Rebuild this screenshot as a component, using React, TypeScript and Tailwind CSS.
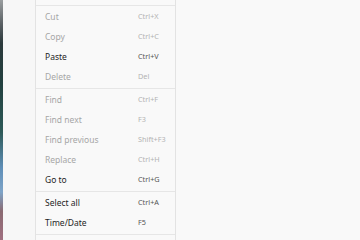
type Item = { label: string; keys: string; disabled?: boolean };

const SECTIONS: Item[][] = [
  [
    { label: 'Cut', keys: 'Ctrl+X', disabled: true },
    { label: 'Copy', keys: 'Ctrl+C', disabled: true },
    { label: 'Paste', keys: 'Ctrl+V' },
    { label: 'Delete', keys: 'Del', disabled: true },
  ],
  [
    { label: 'Find', keys: 'Ctrl+F', disabled: true },
    { label: 'Find next', keys: 'F3', disabled: true },
    { label: 'Find previous', keys: 'Shift+F3', disabled: true },
    { label: 'Replace', keys: 'Ctrl+H', disabled: true },
    { label: 'Go to', keys: 'Ctrl+G' },
  ],
  [
    { label: 'Select all', keys: 'Ctrl+A' },
    { label: 'Time/Date', keys: 'F5' },
  ],
];

function MenuRow({ item }: { item: Item }) {
  return (
    <div className="flex items-center h-[20px] pl-[9px] pr-[8px]">
      <span
        className={`flex-1 text-[8.5px] leading-none ${item.disabled ? 'text-[#a6a6a6]' : 'text-[#1e1e1e]'}`}
      >
        {item.label}
      </span>
      <span
        className={`w-[29px] text-[7.3px] leading-none ${item.disabled ? 'text-[#b3b3b3]' : 'text-[#555555]'}`}
      >
        {item.keys}
      </span>
    </div>
  );
}

export default function App() {
  return (
    <div
      className="flex w-[360px] h-[240px] overflow-hidden bg-[#f9f9f9]"
      style={{ fontFamily: '"Noto Sans", "Open Sans", sans-serif' }}
    >
      {/* wallpaper peeking at the left edge */}
      <div className="w-[3px] shrink-0 bg-[linear-gradient(to_bottom,#9a9ea0_0%,#5a6064_10%,#2c3a3c_18%,#22403f_35%,#2e5a58_55%,#5f8fb8_70%,#7ea4c8_80%,#8a6a72_88%,#a07080_100%)]" />
      <div className="w-[32px] shrink-0 bg-[#f7f7f7]" />

      {/* edit menu */}
      <div className="w-[141px] shrink-0 flex flex-col bg-[#f9f9f9] border-x border-[#e3e3e3]">
        <div className="h-[5px]" />
        {SECTIONS.map((section, i) => (
          <div key={i} className="border-t border-[#e6e6e6] py-px">
            {section.map(item => (
              <MenuRow key={item.label} item={item} />
            ))}
          </div>
        ))}
        <div className="border-t border-[#e6e6e6] flex-1" />
      </div>

      <div className="flex-1 bg-[#f9f9f9]" />
    </div>
  );
}
